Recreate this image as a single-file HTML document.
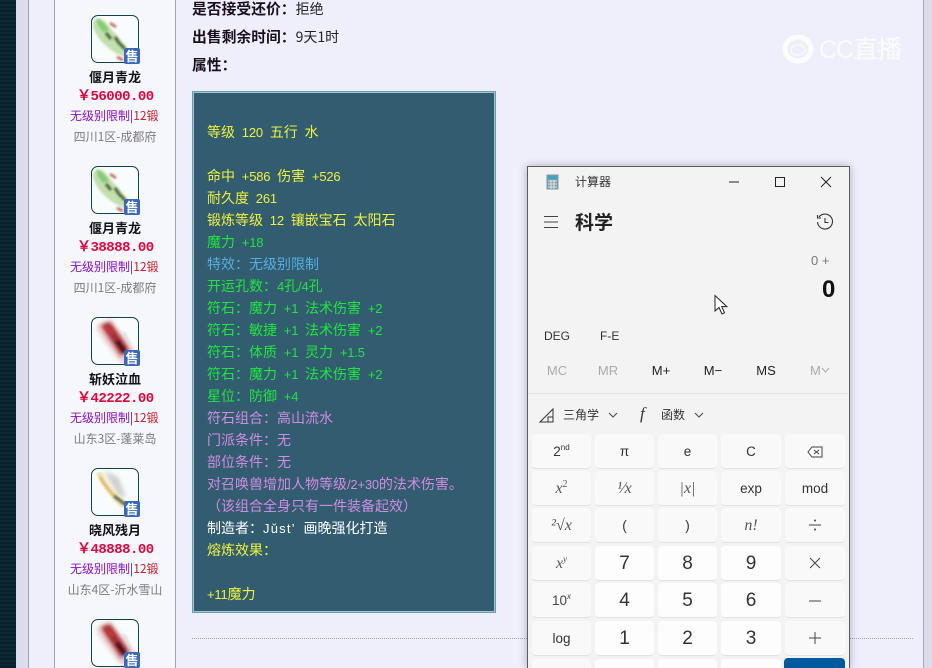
<!DOCTYPE html>
<html><head><meta charset="utf-8"><style>
html,body{margin:0;padding:0;width:932px;height:668px;overflow:hidden}
#r{position:absolute;left:0;top:0;width:932px;height:668px;overflow:hidden;background:#eeeffb;font-family:"Liberation Sans","Noto Sans CJK SC",sans-serif}
#r div,svg.a{position:absolute}
.t{white-space:pre;line-height:20px}
.h{left:192px;font-size:14px;color:#222;font-family:"Noto Sans CJK SC",sans-serif}
.h b{color:#1a0f1f;font-size:14.8px}
.l{left:207px;margin-top:1px;font-size:14px;line-height:22px;height:22px;white-space:pre;font-family:"Noto Sans CJK SC",sans-serif}
.l i{font:13px/22px "Liberation Sans",sans-serif;word-spacing:3.4px;letter-spacing:-.2px}
.y{color:#eef23c}.g{color:#1fe63c}.b{color:#56aee0}.p{color:#d08ce0}.w{color:#fff}
.ic{left:91px;width:46px;height:46px;border:1.5px solid #12414f;border-radius:7px;background:#f8fcfc;overflow:hidden}
.so{left:124px;width:16px;height:16px;background:#3a68bc;color:#fff;font:bold 13px/16px "Noto Sans CJK SC",sans-serif;text-align:center;border-radius:2px}
.n{left:55px;width:120px;text-align:center;font:bold 13px/18px "Noto Sans CJK SC",sans-serif;color:#141018}
.pr{left:77px;font:bold 14px/16px "Liberation Mono",monospace;color:#e0063c;white-space:pre;letter-spacing:-.5px}
.li{left:70px;font:12px/16px "Noto Sans CJK SC",sans-serif;white-space:pre;color:#333}
.li em{font-style:normal;color:#8a10c8}.li s{text-decoration:none;color:#c8202c}
.ar{left:55px;width:120px;text-align:center;font:12px/16px "Noto Sans CJK SC",sans-serif;color:#7c7c7c}
.k{width:59px;height:34px;background:#f9f9f9;border-radius:4px;border-bottom:1px solid #e2e2e2;text-align:center;color:#333;font:13.5px/36px "Liberation Sans",sans-serif}
.d{background:#fdfdfd;font-size:19px;color:#333}
.k sup{font-size:8px;line-height:0;vertical-align:6px}
.k.it{font-family:"Liberation Serif",serif;font-style:italic;font-size:16px;color:#555}
.k svg{vertical-align:middle}
.m{font:13px/16px "Liberation Sans",sans-serif;width:50px;text-align:center;top:363px;color:#222}
.dis{color:#aaa}
</style></head><body><div id="r">
<div style="left:0;top:0;width:16px;height:668px;background:repeating-linear-gradient(180deg,#0c2a36 0,#0c2a36 2px,#08202c 2px,#08202c 4px)"></div>
<div style="left:16px;top:0;width:12px;height:668px;background:#dcdcea"></div>
<div style="left:28px;top:0;width:1px;height:668px;background:#a2a2b2"></div>
<div style="left:29px;top:0;width:25px;height:668px;background:#eeeffb"></div>
<div style="left:54px;top:0;width:1px;height:668px;background:#a2a2b2"></div>
<div style="left:55px;top:0;width:120px;height:668px;background:#f6f6fd"></div>
<div style="left:175px;top:0;width:1px;height:668px;background:#a2a2b2"></div>
<div style="left:923px;top:0;width:1px;height:668px;background:#a8a8b8"></div>
<div style="left:924px;top:0;width:8px;height:668px;background:#dcdcea"></div>

<svg width="0" height="0" style="position:absolute"><defs>
<filter id="bl" filterUnits="userSpaceOnUse" x="-5" y="-5" width="60" height="60"><feGaussianBlur stdDeviation="1.1"/></filter>
<filter id="bl2" filterUnits="userSpaceOnUse" x="-5" y="-5" width="60" height="60"><feGaussianBlur stdDeviation="2.2"/></filter>
<g id="sg"><path d="M1 6C5 0 11 2 15 8C21 16 32 26 42 42C30 42 20 36 11 27C5 21 0 12 1 6Z" fill="#c2e0ae" filter="url(#bl)"/><path d="M5 3C10 4 14 9 17 14L11 16C8 12 4 8 5 3Z" fill="#86cc74" filter="url(#bl)"/><path d="M14 17L19 23M23 21L27 27M27 27L33 33" stroke="#4a6434" stroke-width="3" filter="url(#bl)"/><path d="M18 7L24 11M25 41L31 44" stroke="#c05a50" stroke-width="2.5" filter="url(#bl)"/></g>
<g id="sr"><path d="M4 8L18 2L44 34L30 46C22 34 8 20 4 8Z" fill="#eccccc" filter="url(#bl2)"/><path d="M9 7L18 4L37 31L29 38Z" fill="#a02a30" filter="url(#bl2)"/><path d="M14 9L21 16" stroke="#c83838" stroke-width="4" filter="url(#bl)"/><path d="M25 23L33 34" stroke="#4a1418" stroke-width="4" filter="url(#bl)"/><path d="M32 14L38 28" stroke="#d8d8d8" stroke-width="2" filter="url(#bl)"/></g>
<g id="sy"><path d="M12 2L26 8L34 28L26 26Z" fill="#cfcfcf" filter="url(#bl2)"/><path d="M4 4C8 14 16 24 28 38C34 38 36 36 36 34C24 26 14 14 10 3Z" fill="#eee0a8" filter="url(#bl)"/><path d="M8 8C12 16 18 22 22 27" stroke="#dcae58" stroke-width="2" fill="none" filter="url(#bl)"/><path d="M22 27L34 36" stroke="#5a6c48" stroke-width="3" filter="url(#bl)"/></g>
</defs></svg>

<div class="ic" style="top:15px"><svg width="46" height="46"><use href="#sg"/></svg></div><div class="so" style="top:48px">售</div>
<div class="n" style="top:68px">偃月青龙</div>
<div class="pr" style="top:89px">￥56000.00</div>
<div class="li" style="top:108px"><em>无级别限制</em>|<s>12锻</s></div>
<div class="ar" style="top:129px">四川1区-成都府</div>

<div class="ic" style="top:166px"><svg width="46" height="46"><use href="#sg"/></svg></div><div class="so" style="top:199px">售</div>
<div class="n" style="top:219px">偃月青龙</div>
<div class="pr" style="top:240px">￥38888.00</div>
<div class="li" style="top:259px"><em>无级别限制</em>|<s>12锻</s></div>
<div class="ar" style="top:280px">四川1区-成都府</div>

<div class="ic" style="top:317px"><svg width="46" height="46"><use href="#sr"/></svg></div><div class="so" style="top:350px">售</div>
<div class="n" style="top:370px">斩妖泣血</div>
<div class="pr" style="top:391px">￥42222.00</div>
<div class="li" style="top:410px"><em>无级别限制</em>|<s>12锻</s></div>
<div class="ar" style="top:431px">山东3区-蓬莱岛</div>

<div class="ic" style="top:468px"><svg width="46" height="46"><use href="#sy"/></svg></div><div class="so" style="top:501px">售</div>
<div class="n" style="top:521px">晓风残月</div>
<div class="pr" style="top:542px">￥48888.00</div>
<div class="li" style="top:561px"><em>无级别限制</em>|<s>12锻</s></div>
<div class="ar" style="top:582px">山东4区-沂水雪山</div>

<div class="ic" style="top:619px"><svg width="46" height="46"><use href="#sr"/></svg></div><div class="so" style="top:652px">售</div>

<div class="h t" style="top:-1px"><b>是否接受还价：</b>拒绝</div>
<div class="h t" style="top:27px"><b>出售剩余时间：</b>9天1时</div>
<div class="h t" style="top:55px"><b>属性：</b></div>

<div style="left:192px;top:91px;width:302px;height:520px;background:#325c70;border:1px solid #6f9aae;box-shadow:inset 0 0 0 1px #a0c4d0"></div>
<div class="l y" style="top:120px">等级<i> 120 </i>五行<i> </i>水</div>
<div class="l y" style="top:164px">命中<i> +586 </i>伤害<i> +526</i></div>
<div class="l y" style="top:186px">耐久度<i> 261</i></div>
<div class="l y" style="top:208px">锻炼等级<i> 12 </i>镶嵌宝石<i> </i>太阳石</div>
<div class="l g" style="top:230px">魔力<i> +18</i></div>
<div class="l b" style="top:252px">特效：无级别限制</div>
<div class="l g" style="top:274px">开运孔数：<i>4</i>孔<i>/4</i>孔</div>
<div class="l g" style="top:296px">符石：魔力<i> +1 </i>法术伤害<i> +2</i></div>
<div class="l g" style="top:318px">符石：敏捷<i> +1 </i>法术伤害<i> +2</i></div>
<div class="l g" style="top:340px">符石：体质<i> +1 </i>灵力<i> +1.5</i></div>
<div class="l g" style="top:362px">符石：魔力<i> +1 </i>法术伤害<i> +2</i></div>
<div class="l g" style="top:384px">星位：防御<i> +4</i></div>
<div class="l p" style="top:406px">符石组合：高山流水</div>
<div class="l p" style="top:428px">门派条件：无</div>
<div class="l p" style="top:450px">部位条件：无</div>
<div class="l p" style="top:472px">对召唤兽增加人物等级<i>/2+30</i>的法术伤害。</div>
<div class="l p" style="top:494px">（该组合全身只有一件装备起效）</div>
<div class="l w" style="top:516px">制造者：<i style="letter-spacing:1.2px">Jǔst’ </i>画晚强化打造</div>
<div class="l y" style="top:538px">熔炼效果：</div>
<div class="l y" style="top:582px"><i>+11</i>魔力</div>

<div style="left:192px;top:638px;width:721px;height:0;border-top:1px dotted #a0a0b0"></div>

<svg class="a" style="left:781px;top:31px;opacity:.85" width="36" height="36"><ellipse cx="17" cy="18" rx="13" ry="12" fill="none" stroke="#fff" stroke-width="5"/><ellipse cx="17" cy="19" rx="7" ry="5" fill="none" stroke="#fff" stroke-width="1.5" opacity=".7"/></svg>
<div class="t" style="left:819px;top:36px;font:25px/28px 'Liberation Sans','Noto Sans CJK SC',sans-serif;color:#fff;opacity:.8;white-space:pre;letter-spacing:-1px">CC直播</div>

<!-- calculator -->
<div style="left:527px;top:166px;width:321px;height:502px;background:#f3f3f3;border:1px solid #5c5c5e;border-bottom:0;box-shadow:0 0 8px rgba(0,0,0,.28)"></div>
<svg class="a" style="left:546px;top:174px" width="14" height="16"><rect x="0.5" y="0.5" width="12" height="15" fill="#7d9aa8"/><rect x="2" y="2" width="9" height="3" fill="#3da6c8"/><path d="M2 7H11M2 10H11M2 13H11M5 6V15M8 6V15" stroke="#dfe6ea" stroke-width="1"/></svg>
<div class="t" style="left:575px;top:173px;font:12px/18px 'Noto Sans CJK SC',sans-serif;color:#333">计算器</div>
<svg class="a" style="left:726px;top:174px" width="110" height="16"><path d="M3 8H13" stroke="#222" stroke-width="1"/><rect x="49.5" y="3.5" width="9" height="9" fill="none" stroke="#222" stroke-width="1"/><path d="M95 3L105 13M105 3L95 13" stroke="#222" stroke-width="1"/></svg>
<svg class="a" style="left:543px;top:215px" width="16" height="14"><path d="M1 1.5H15M1 7H15M1 12.5H15" stroke="#444" stroke-width="1"/></svg>
<div class="t" style="left:575px;top:210px;font:bold 19px/24px 'Noto Sans CJK SC',sans-serif;color:#222">科学</div>
<svg class="a" style="left:816px;top:213px" width="18" height="18"><path d="M3 4A7.5 7.5 0 1 1 1.5 9" fill="none" stroke="#333" stroke-width="1.1"/><path d="M1.5 2V5H5M9 5V9.5H12.5" fill="none" stroke="#333" stroke-width="1.1"/></svg>
<div class="t" style="left:811px;top:252px;font:13px/18px 'Liberation Sans',sans-serif;color:#777">0 +</div>
<div class="t" style="left:822px;top:275px;font:bold 24px/30px 'Liberation Sans',sans-serif;color:#111">0</div>
<svg class="a" style="left:713px;top:294px" width="15" height="22"><path d="M2 1.5V17L6 13.5L9 20L11.5 18.8L8.8 12.6H13.8Z" fill="#fff" stroke="#222" stroke-width="1"/></svg>
<div class="t" style="left:544px;top:327px;font:12px/18px 'Liberation Sans',sans-serif;color:#333">DEG</div>
<div class="t" style="left:600px;top:327px;font:12px/18px 'Liberation Sans',sans-serif;color:#333">F-E</div>
<div class="m dis" style="left:532px">MC</div>
<div class="m dis" style="left:583px">MR</div>
<div class="m" style="left:636px">M+</div>
<div class="m" style="left:688px">M−</div>
<div class="m" style="left:741px">MS</div>
<div class="t dis" style="left:810px;top:363px;font:13px/16px 'Liberation Sans',sans-serif;color:#aaa">M</div>
<svg class="a" style="left:821px;top:367px" width="9" height="7"><path d="M1 1L4.5 5L8 1" fill="none" stroke="#aaa"/></svg>
<div style="left:528px;top:393px;width:320px;height:1px;background:#e6e6e6"></div>
<svg class="a" style="left:539px;top:407px" width="16" height="16"><path d="M1 15L14 2V15Z M9 15V10H14" fill="none" stroke="#333" stroke-width="1"/></svg>
<div class="t" style="left:563px;top:406px;font:12px/18px 'Noto Sans CJK SC',sans-serif;color:#333">三角学</div>
<svg class="a" style="left:608px;top:412px" width="10" height="7"><path d="M1 1L5 5L9 1" fill="none" stroke="#444"/></svg>
<div class="t" style="left:640px;top:403px;font:italic 17px/22px 'Liberation Serif',serif;color:#333">f</div>
<div class="t" style="left:661px;top:406px;font:12px/18px 'Noto Sans CJK SC',sans-serif;color:#333">函数</div>
<svg class="a" style="left:694px;top:412px" width="10" height="7"><path d="M1 1L5 5L9 1" fill="none" stroke="#444"/></svg>

<div class="k" style="left:532px;top:434px">2<sup>nd</sup></div>
<div class="k" style="left:595px;top:434px">π</div>
<div class="k" style="left:658px;top:434px">e</div>
<div class="k" style="left:721px;top:434px;width:60px">C</div>
<div class="k" style="left:785px;top:434px;width:60px"><svg width="16" height="12"><path d="M5 1H15V11H5L1 6Z M7 4L12 8M12 4L7 8" fill="none" stroke="#444"/></svg></div>

<div class="k it" style="left:532px;top:471px">x<sup style="font-style:normal;font-size:10px">2</sup></div>
<div class="k it" style="left:595px;top:471px">¹⁄x</div>
<div class="k it" style="left:658px;top:471px">|x|</div>
<div class="k" style="left:721px;top:471px;width:60px">exp</div>
<div class="k" style="left:785px;top:471px;width:60px">mod</div>

<div class="k it" style="left:532px;top:508px">²√x</div>
<div class="k" style="left:595px;top:508px">(</div>
<div class="k" style="left:658px;top:508px">)</div>
<div class="k it" style="left:721px;top:508px;width:60px">n!</div>
<div class="k" style="left:785px;top:508px;width:60px"></div>
<svg class="a" style="left:808px;top:518px" width="14" height="14"><path d="M1 7H13" stroke="#444"/><circle cx="7" cy="2.5" r="1" fill="#444"/><circle cx="7" cy="11.5" r="1" fill="#444"/></svg>

<div class="k it" style="left:532px;top:546px">x<sup style="font-size:9px">y</sup></div>
<div class="k d" style="left:595px;top:546px">7</div>
<div class="k d" style="left:658px;top:546px">8</div>
<div class="k d" style="left:721px;top:546px;width:60px">9</div>
<div class="k" style="left:785px;top:546px;width:60px"></div>
<svg class="a" style="left:808px;top:556px" width="14" height="14"><path d="M2 2L12 12M12 2L2 12" stroke="#444"/></svg>

<div class="k" style="left:532px;top:583px;color:#444">10<sup><i>x</i></sup></div>
<div class="k d" style="left:595px;top:583px">4</div>
<div class="k d" style="left:658px;top:583px">5</div>
<div class="k d" style="left:721px;top:583px;width:60px">6</div>
<div class="k" style="left:785px;top:583px;width:60px"></div>
<svg class="a" style="left:808px;top:594px" width="14" height="14"><path d="M1 7H13" stroke="#444"/></svg>

<div class="k" style="left:532px;top:621px">log</div>
<div class="k d" style="left:595px;top:621px">1</div>
<div class="k d" style="left:658px;top:621px">2</div>
<div class="k d" style="left:721px;top:621px;width:60px">3</div>
<div class="k" style="left:785px;top:621px;width:60px"></div>
<svg class="a" style="left:808px;top:631px" width="14" height="14"><path d="M1 7H13M7 1V13" stroke="#444"/></svg>

<div class="k" style="left:532px;top:659px"></div>
<div class="k d" style="left:595px;top:659px"></div>
<div class="k d" style="left:658px;top:659px"></div>
<div class="k d" style="left:721px;top:659px;width:60px"></div>
<div class="k" style="left:784px;top:658px;width:61px;background:#005a9e;border:0"></div>
</div></body></html>
